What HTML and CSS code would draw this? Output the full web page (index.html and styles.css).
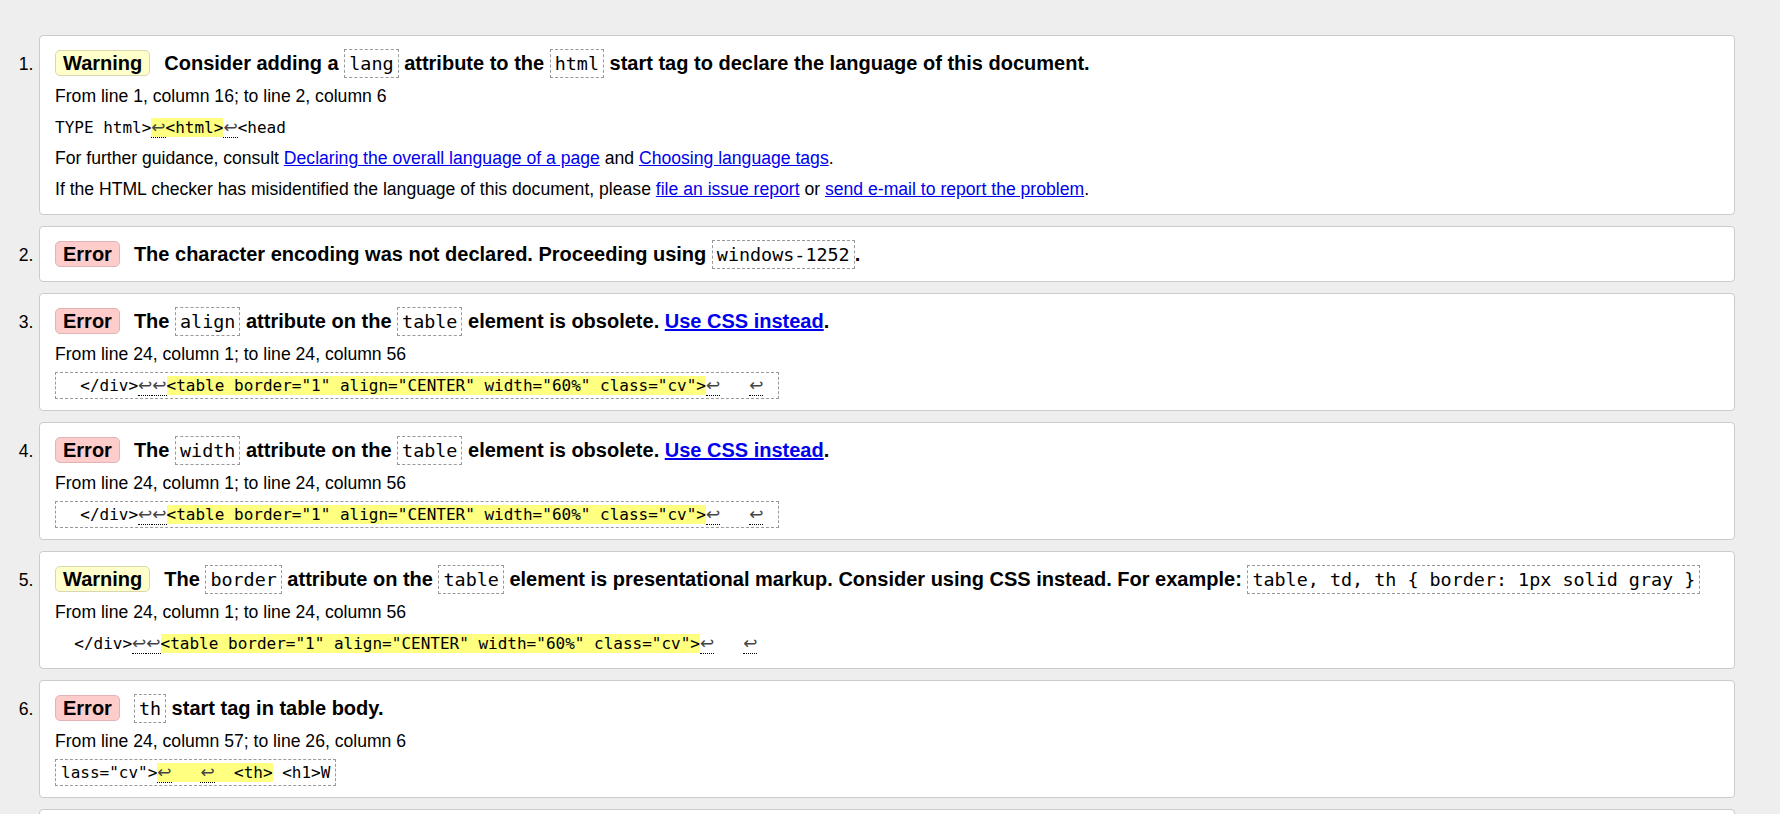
FILE: index.html
```html
<!DOCTYPE html>
<html lang="en">
<head>
<meta charset="utf-8">
<title>Validation results</title>
<link rel="stylesheet" href="styles.css">
</head>
<body>
<div class="page">
  <ol class="messages">
    <li class="msg">
      <span class="num">1.</span>
      <div class="card">
        <p class="title"><span class="badge warning">Warning</span>Consider adding a <code class="code">lang</code> attribute to the <code class="code">html</code> start tag to declare the language of this document.</p>
        <p class="line">From line 1, column 16; to line 2, column 6</p>
        <p class="line"><code class="extract">TYPE html&gt;<mark class="hl"><span class="nl">↩</span>&lt;html&gt;</mark><span class="nl">↩</span>&lt;head</code></p>
        <p class="line">For further guidance, consult <a href="#">Declaring the overall language of a page</a> and <a href="#">Choosing language tags</a>.</p>
        <p class="line">If the HTML checker has misidentified the language of this document, please <a href="#">file an issue report</a> or <a href="#">send e-mail to report the problem</a>.</p>
      </div>
    </li>
    <li class="msg">
      <span class="num">2.</span>
      <div class="card">
        <p class="title"><span class="badge error">Error</span>The character encoding was not declared. Proceeding using <code class="code">windows-1252</code>.</p>
      </div>
    </li>
    <li class="msg">
      <span class="num">3.</span>
      <div class="card">
        <p class="title"><span class="badge error">Error</span>The <code class="code">align</code> attribute on the <code class="code">table</code> element is obsolete. <a href="#">Use CSS instead</a>.</p>
        <p class="line">From line 24, column 1; to line 24, column 56</p>
        <p class="line"><code class="extract boxed">  &lt;/div&gt;<span class="nl">↩</span><span class="nl">↩</span><mark class="hl">&lt;table border="1" align="CENTER" width="60%" class="cv"&gt;</mark><span class="nl">↩</span>   <span class="nl">↩</span> </code></p>
      </div>
    </li>
    <li class="msg">
      <span class="num">4.</span>
      <div class="card">
        <p class="title"><span class="badge error">Error</span>The <code class="code">width</code> attribute on the <code class="code">table</code> element is obsolete. <a href="#">Use CSS instead</a>.</p>
        <p class="line">From line 24, column 1; to line 24, column 56</p>
        <p class="line"><code class="extract boxed">  &lt;/div&gt;<span class="nl">↩</span><span class="nl">↩</span><mark class="hl">&lt;table border="1" align="CENTER" width="60%" class="cv"&gt;</mark><span class="nl">↩</span>   <span class="nl">↩</span> </code></p>
      </div>
    </li>
    <li class="msg">
      <span class="num">5.</span>
      <div class="card">
        <p class="title"><span class="badge warning">Warning</span>The <code class="code">border</code> attribute on the <code class="code">table</code> element is presentational markup. Consider using CSS instead. For example: <code class="code">table, td, th { border: 1px solid gray }</code></p>
        <p class="line">From line 24, column 1; to line 24, column 56</p>
        <p class="line"><code class="extract">  &lt;/div&gt;<span class="nl">↩</span><span class="nl">↩</span><mark class="hl">&lt;table border="1" align="CENTER" width="60%" class="cv"&gt;</mark><span class="nl">↩</span>   <span class="nl">↩</span> </code></p>
      </div>
    </li>
    <li class="msg">
      <span class="num">6.</span>
      <div class="card">
        <p class="title"><span class="badge error">Error</span><code class="code">th</code> start tag in table body.</p>
        <p class="line">From line 24, column 57; to line 26, column 6</p>
        <p class="line"><code class="extract boxed">lass="cv"&gt;<mark class="hl"><span class="nl">↩</span>   <span class="nl">↩</span>  &lt;th&gt;</mark> &lt;h1&gt;W</code></p>
      </div>
    </li>
    <li class="msg">
      <span class="num">7.</span>
      <div class="card">
        <p class="title"><span class="badge error">Error</span>Stray end tag <code class="code">h1</code>.</p>
        <p class="line">From line 26, column 20; to line 26, column 24</p>
      </div>
    </li>
  </ol>
</div>
</body>
</html>
```

FILE: styles.css
```css
html, body {
  margin: 0;
  padding: 0;
}

body {
  background: #ffffff;
  color: #000000;
  font-family: "Liberation Sans", Arial, sans-serif;
  overflow: hidden;
}

.page {
  width: 1780px;
  height: 814px;
  overflow: hidden;
  box-sizing: border-box;
  background: #eeeeee;
  padding-top: 35px;
}

.messages {
  list-style: none;
  margin: 0;
  padding: 0 45px 0 0;
}

.msg {
  display: flex;
  align-items: baseline;
  margin-bottom: 11px;
}

.num {
  flex: none;
  width: 39px;
  box-sizing: border-box;
  padding-right: 5.5px;
  text-align: right;
  font-size: 17.6px;
}

.card {
  flex: 1;
  min-width: 0;
  background: #ffffff;
  border: 1px solid #cccccc;
  border-radius: 4px;
  padding: 9px 15px;
  font-size: 17.6px;
}

.title {
  margin: 0;
  font-weight: bold;
  font-size: 20px;
  line-height: 36px;
  white-space: nowrap;
}

.line {
  margin: 0;
  line-height: 31px;
  white-space: nowrap;
}

.badge {
  display: inline-block;
  line-height: 24px;
  padding: 0 7px;
  border: 1px solid;
  border-radius: 5px;
  margin-right: 14px;
}

.warning {
  background: #ffffcc;
  border-color: #d8d8b0;
}

.error {
  background: #ffcccc;
  border-color: #e2b4b4;
}

.code {
  display: inline-block;
  font-family: "DejaVu Sans Mono", "Liberation Mono", monospace;
  font-weight: normal;
  font-size: 18.4px;
  line-height: 21px;
  padding: 3px 4px;
  border: 1px dashed #999999;
}

a {
  color: #0000ee;
  text-decoration: underline;
}

.extract {
  font-family: "DejaVu Sans Mono", "Liberation Mono", monospace;
  font-size: 16px;
  white-space: pre;
}

.boxed {
  padding: 3px 5px;
  border: 1px dashed #999999;
}

.hl {
  background: #ffff80;
  color: #000000;
}

.nl {
  font-family: "DejaVu Sans", sans-serif;
  font-size: 17px;
  color: #444444;
  border-bottom: 1px dotted #000000;
}
```
